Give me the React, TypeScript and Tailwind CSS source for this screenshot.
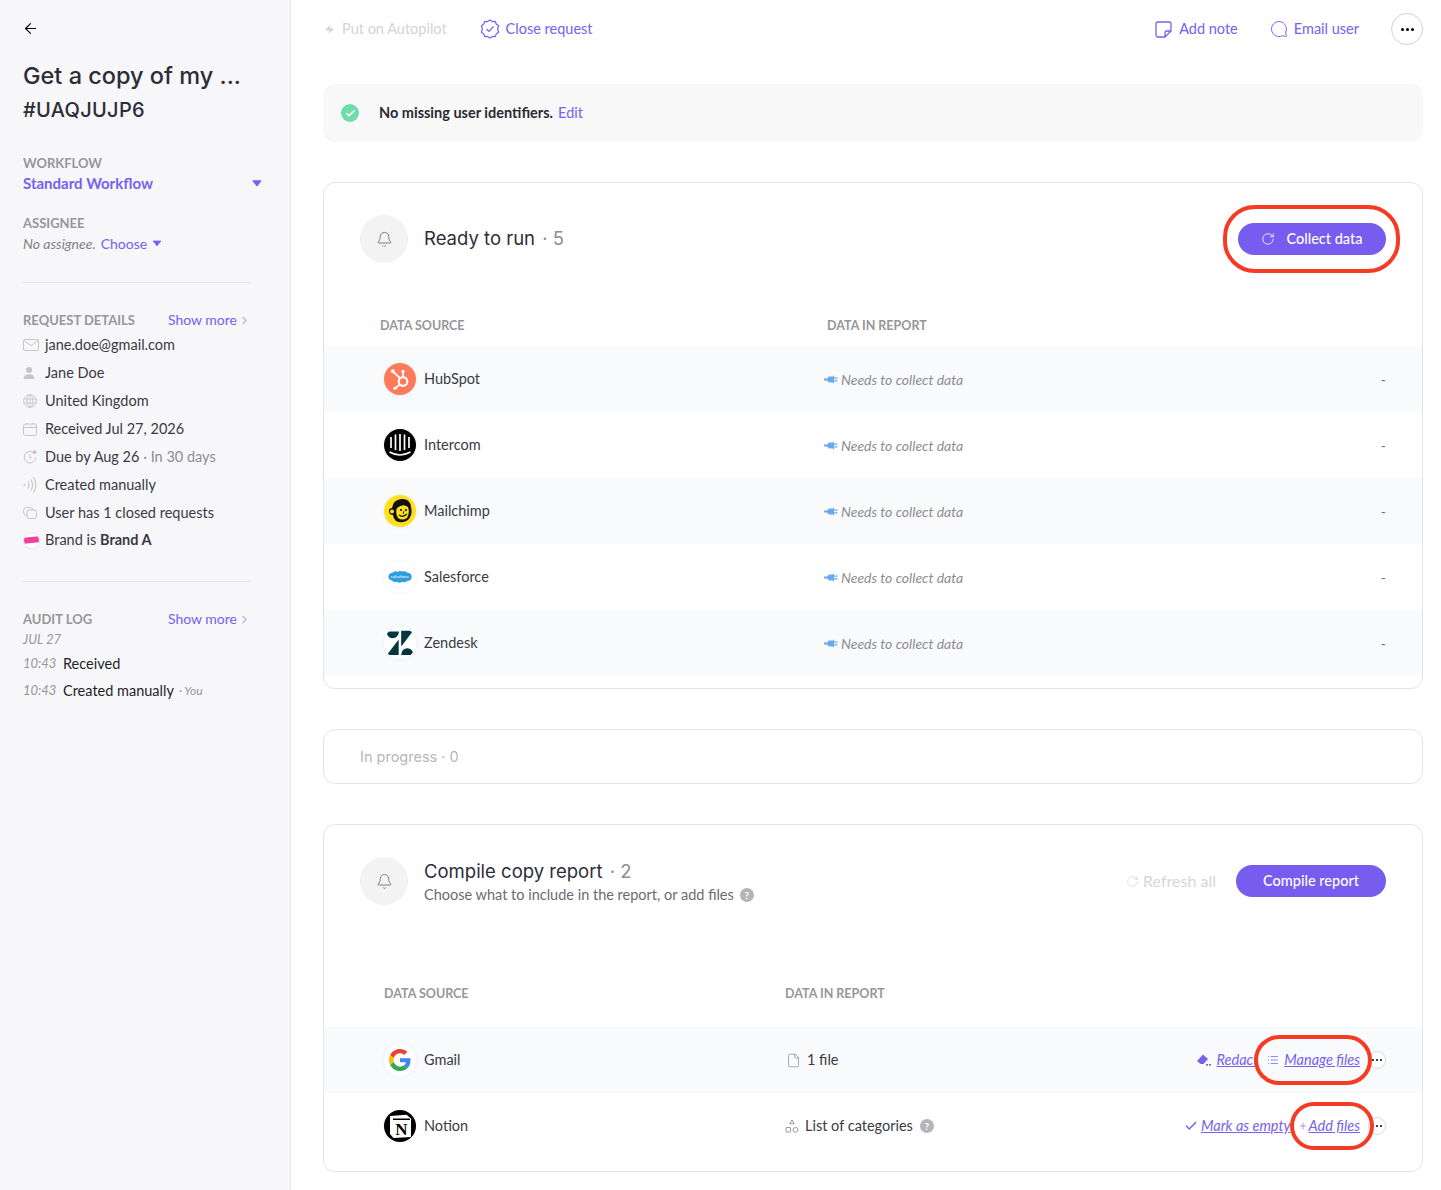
import { ArrowLeft, Bell, Check, ChevronRight, File, List, MessageCircle, Plus, RotateCw, Zap } from "lucide-react";
import type { ReactNode } from "react";

const heading = "[font-family:Inter,sans-serif]";

function Caret({ className = "" }: { className?: string }) {
  return (
    <svg viewBox="0 0 10 7" className={`w-[10px] h-[7px] ${className}`}>
      <path d="M0.5 1 Q0.3 0.3 1 0.3 H9 Q9.7 0.3 9.5 1 L5.5 6 Q5 6.5 4.5 6 Z" fill="#7860f2" />
    </svg>
  );
}

function HelpDot() {
  return (
    <span className="w-[14px] h-[14px] rounded-full bg-[#b5b5b8] text-white text-[10px] font-bold flex items-center justify-center leading-none">
      ?
    </span>
  );
}

function Bubble() {
  return (
    <div className="w-12 h-12 rounded-full bg-[#f3f3f3] flex items-center justify-center shrink-0">
      <Bell size={17} strokeWidth={1.3} className="text-[#75757c]" />
    </div>
  );
}

function Plug() {
  return (
    <svg viewBox="0 0 14 9" className="w-[14px] h-[9px] shrink-0">
      <path d="M0 3.6 H3 L5 1.5 H9 V0.8 H10 V2.6 H13.5 V3.7 H10 V5.3 H13.5 V6.4 H10 V8.2 H9 V7.5 H5 L3 5.4 H0 Z" fill="#6aa9f2" />
    </svg>
  );
}

function DotsButton({ size }: { size: "lg" | "sm" }) {
  const big = size === "lg";
  return (
    <div className={`${big ? "w-8 h-8 border-[#d4d4d4]" : "w-[18px] h-[18px] border-[#dadada]"} rounded-full border bg-white flex items-center justify-center gap-[2px] shrink-0`}>
      {[0, 1, 2].map((i) => (
        <span key={i} className={`${big ? "w-[3px] h-[3px]" : "w-[2px] h-[2px]"} rounded-full bg-black`} />
      ))}
    </div>
  );
}

function RedRing({ className }: { className: string }) {
  return <span className={`absolute border-[4px] border-[#f53b24] rounded-[30px] pointer-events-none ${className}`} />;
}

/* logos */
function LogoCircle({ children, className = "" }: { children: ReactNode; className?: string }) {
  return (
    <div className={`w-8 h-8 rounded-full flex items-center justify-center overflow-hidden shrink-0 shadow-[0_0_4px_rgba(0,0,0,0.06)] ${className}`}>
      {children}
    </div>
  );
}

const HubSpot = (
  <LogoCircle className="bg-[#ff7a59]">
    <svg viewBox="0 0 32 32" className="w-8 h-8" fill="none" stroke="#fff">
      <circle cx="19" cy="18.5" r="4.3" strokeWidth="2.2" />
      <path d="M19 14 V9.5" strokeWidth="1.8" />
      <circle cx="19" cy="8.5" r="1.7" fill="#fff" stroke="none" />
      <path d="M9.5 9 L15.8 15" strokeWidth="1.8" />
      <circle cx="8.8" cy="8.2" r="2" fill="#fff" stroke="none" />
      <path d="M15.6 21.8 L11.5 25" strokeWidth="1.8" />
      <circle cx="11" cy="25.3" r="1.6" fill="#fff" stroke="none" />
    </svg>
  </LogoCircle>
);

const Intercom = (
  <LogoCircle className="bg-black">
    <svg viewBox="0 0 32 32" className="w-8 h-8" fill="none" stroke="#fff" strokeWidth="1.7">
      <path d="M7 8 V19 M11.5 5.5 V21 M16 5 V22 M20.5 5.5 V21 M25 8 V19" />
      <path d="M5.5 23 Q16 29 26.5 23" strokeWidth="1.5" />
    </svg>
  </LogoCircle>
);

const Mailchimp = (
  <LogoCircle className="bg-[#ffe01b]">
    <svg viewBox="0 0 32 32" className="w-8 h-8">
      <path d="M8 13 Q9 5 17 4 Q26 3 27 12 Q29 20 24 25 Q18 29 12 26 Q9 23 9 20 Q5 20 5 16 Q5 13 8 13 Z" fill="#111" />
      <path d="M13 13 Q19 8 24 12 Q26 18 23 23 Q18 26 14 23 Q11 18 13 13 Z" fill="#ffe01b" />
      <circle cx="17" cy="15" r="1.1" fill="#111" />
      <circle cx="22" cy="15" r="1.1" fill="#111" />
      <path d="M15 20 Q19 23 23 19" stroke="#111" strokeWidth="1.2" fill="none" />
      <path d="M20 16 L19 19" stroke="#111" strokeWidth="0.9" fill="none" />
      <circle cx="8" cy="16.5" r="2" fill="#ffe01b" />
    </svg>
  </LogoCircle>
);

const Salesforce = (
  <LogoCircle className="bg-white">
    <svg viewBox="0 0 32 32" className="w-8 h-8">
      <path d="M9 11.5 Q11 9.5 13.5 11 Q15.5 9 18.5 10.6 Q21 9.6 23 11.5 Q27.5 12 27.7 15.8 Q27.5 20 23 20 Q21 22 18 20.8 Q15.5 22.5 13 20.8 Q9.5 21.8 8 19.5 Q4.4 18.6 4.4 15.5 Q4.7 12 9 11.5 Z" fill="#2f9fdc" />
      <text x="16" y="17" textAnchor="middle" fontSize="4.2" fill="#fff" fontFamily="Lato, sans-serif">salesforce</text>
    </svg>
  </LogoCircle>
);

const Zendesk = (
  <LogoCircle className="bg-white">
    <svg viewBox="0 0 32 32" className="w-8 h-8" fill="#03363d">
      <path d="M2.5 4.5 H15 Q14.5 11 8.5 11.2 Q3 11 2.5 4.5 Z" />
      <path d="M14.7 12.5 V28 H2.8 Z" />
      <path d="M17.2 3.8 H29.2 L17.2 19.5 Z" />
      <path d="M17.2 28 Q17.8 21.5 23.3 21.3 Q29 21.5 29.3 28 Z" />
    </svg>
  </LogoCircle>
);

const Google = (
  <LogoCircle className="bg-white">
    <svg viewBox="0 0 48 48" className="w-[22px] h-[22px]">
      <path fill="#EA4335" d="M24 9.5c3.54 0 6.71 1.22 9.21 3.6l6.85-6.85C35.9 2.38 30.47 0 24 0 14.62 0 6.51 5.38 2.56 13.22l7.98 6.19C12.43 13.72 17.74 9.5 24 9.5z" />
      <path fill="#4285F4" d="M46.98 24.55c0-1.57-.15-3.09-.38-4.55H24v9.02h12.94c-.58 2.96-2.26 5.48-4.78 7.18l7.73 6c4.51-4.18 7.09-10.36 7.09-17.65z" />
      <path fill="#FBBC05" d="M10.53 28.59c-.48-1.45-.76-2.99-.76-4.59s.27-3.14.76-4.59l-7.98-6.19C.92 16.46 0 20.12 0 24c0 3.88.92 7.54 2.56 10.78l7.97-6.19z" />
      <path fill="#34A853" d="M24 48c6.48 0 11.93-2.13 15.89-5.81l-7.73-6c-2.15 1.45-4.92 2.3-8.16 2.3-6.26 0-11.57-4.22-13.47-9.91l-7.98 6.19C6.51 42.62 14.62 48 24 48z" />
    </svg>
  </LogoCircle>
);

const Notion = (
  <LogoCircle className="bg-black">
    <svg viewBox="0 0 32 32" className="w-8 h-8">
      <path d="M6 6 L22.5 4.8 L27 8.5 V27 L9.5 28 L6 24 Z" fill="#fff" />
      <path d="M9 9.2 H26" stroke="#000" strokeWidth="1.4" />
      <text x="17.5" y="25" textAnchor="middle" fontSize="17" fontWeight="700" fill="#000" fontFamily="'Liberation Serif', serif">N</text>
    </svg>
  </LogoCircle>
);

const SideMail = (
  <svg viewBox="0 0 16 12" className="w-4 h-3" fill="none" stroke="#c6c6ca">
    <rect x="0.5" y="0.5" width="15" height="11" rx="1.5" />
    <path d="M1 1.5 L8 6.5 L15 1.5" />
  </svg>
);
const SidePerson = (
  <svg viewBox="0 0 12 12" className="w-3 h-3" fill="#c6c6ca">
    <circle cx="6" cy="3" r="3" />
    <path d="M0.5 12 Q0.5 7.3 6 7.3 Q11.5 7.3 11.5 12 Z" />
  </svg>
);
const SideGlobe = (
  <svg viewBox="0 0 14 14" className="w-[14px] h-[14px]" fill="none" stroke="#c6c6ca" strokeWidth="0.9">
    <circle cx="7" cy="7" r="6.4" />
    <ellipse cx="7" cy="7" rx="3" ry="6.4" />
    <path d="M7 0.6 V13.4 M0.8 5 H13.2 M0.8 9 H13.2" />
  </svg>
);
const SideCalendar = (
  <svg viewBox="0 0 14 13" className="w-[14px] h-[13px]" fill="none" stroke="#c6c6ca">
    <rect x="0.5" y="1" width="13" height="11.5" rx="2" />
    <path d="M0.5 4.5 H13.5 M4 0 V1.5 M10 0 V1.5" />
  </svg>
);
const SideClock = (
  <svg viewBox="0 0 14 14" className="w-[14px] h-[14px]" fill="none" stroke="#c6c6ca">
    <path d="M10.5 2.6 A5.8 5.8 0 1 0 12.8 7.5" />
    <path d="M6.8 4.5 V7.8 H9.3" />
    <circle cx="11.6" cy="2.2" r="1.9" fill="#c6c6ca" stroke="none" />
  </svg>
);
const SideSignal = (
  <svg viewBox="0 0 14 18" className="w-[14px] h-[18px]" fill="none" stroke="#c6c6ca" strokeWidth="1.1">
    <circle cx="1.5" cy="9" r="1.1" fill="#c6c6ca" stroke="none" />
    <path d="M5 5.5 Q7 9 5 12.5 M8 3.5 Q11 9 8 14.5 M10.5 1 Q15 9 10.5 17" />
  </svg>
);
const SideStack = (
  <svg viewBox="0 0 14 12" className="w-[14px] h-3" fill="none" stroke="#c6c6ca">
    <rect x="4" y="3" width="9.5" height="8.5" rx="2.5" />
    <path d="M4 9 Q0.6 8.5 0.6 5 V3.5 Q0.6 0.6 3.5 0.6 H7 Q9.7 0.6 10 3" />
  </svg>
);
const SideBrand = (
  <div className="w-[17px] h-[17px] rounded-full bg-white border border-[#e4e4e6] flex items-center justify-center overflow-hidden">
    <span className="w-[15px] h-[6px] bg-[#f23f9f] -rotate-6" />
  </div>
);

const details: { icon: ReactNode; body: ReactNode }[] = [
  { icon: SideMail, body: "jane.doe@gmail.com" },
  { icon: SidePerson, body: "Jane Doe" },
  { icon: SideGlobe, body: "United Kingdom" },
  { icon: SideCalendar, body: "Received Jul 27, 2026" },
  { icon: SideClock, body: <>Due by Aug 26 <span className="text-[#8d8d92]">· In 30 days</span></> },
  { icon: SideSignal, body: "Created manually" },
  { icon: SideStack, body: "User has 1 closed requests" },
  { icon: SideBrand, body: <>Brand is <span className="font-bold">Brand A</span></> },
];

const readySources = [
  { name: "HubSpot", logo: HubSpot },
  { name: "Intercom", logo: Intercom },
  { name: "Mailchimp", logo: Mailchimp },
  { name: "Salesforce", logo: Salesforce },
  { name: "Zendesk", logo: Zendesk },
];

function Label({ children }: { children: ReactNode }) {
  return <div className="text-[13px] font-bold text-[#96969b] leading-4">{children}</div>;
}

function ShowMore() {
  return (
    <a className="flex items-center text-[14px] text-[#7860f2] leading-4">
      Show more <ChevronRight size={13} strokeWidth={1.5} className="ml-[1px]" />
    </a>
  );
}

function Sidebar() {
  return (
    <aside className="w-[291px] shrink-0 h-full bg-[#f7f7fa] border-r border-[#e6e6ea] pl-[23px] pr-[39px]">
      <div className="h-[58px] flex items-center pb-[1px]">
        <ArrowLeft size={17} strokeWidth={1.5} className="text-black -ml-[1px]" />
      </div>
      <h1 className={`${heading} text-[23.5px] font-medium text-[#2d2d38] leading-9 whitespace-nowrap`}>Get a copy of my ...</h1>
      <h2 className={`${heading} text-[20px] font-medium text-[#2d2d38] leading-7 mt-[2px] tracking-[0.3px]`}>#UAQJUJP6</h2>
      <div className="mt-[31px]">
        <Label>WORKFLOW</Label>
        <div className="flex items-center justify-between h-[24px] -mr-3">
          <span className="text-[15px] font-bold text-[#7860f2]">Standard Workflow</span>
          <Caret className="mr-[1px]" />
        </div>
      </div>
      <div className="mt-[20px]">
        <Label>ASSIGNEE</Label>
        <div className="flex items-center h-[24px] text-[14px]">
          <span className="italic text-[#808085]">No assignee.</span>
          <span className="text-[#7860f2] ml-[5px]">Choose</span>
          <Caret className="ml-[5px] scale-90" />
        </div>
      </div>
      <div className="h-px bg-[#e4e4e8] mt-[27px]" />

      <div className="flex items-center justify-between mt-[29px] h-4">
        <Label>REQUEST DETAILS</Label>
        <ShowMore />
      </div>
      <div className="mt-[3px]">
        {details.map((d, i) => (
          <div key={i} className="h-7 flex items-center text-[14.5px] text-[#3a3a44] last:h-[26px]">
            <span className="w-[22px] flex items-center shrink-0">{d.icon}</span>
            <span>{d.body}</span>
          </div>
        ))}
      </div>
      <div className="h-px bg-[#e4e4e8] mt-[28px]" />

      <div className="flex items-center justify-between mt-[29px] h-4">
        <Label>AUDIT LOG</Label>
        <ShowMore />
      </div>
      <div className="italic text-[13px] text-[#96969b] leading-4 mt-[4px]">JUL 27</div>
      <div className="flex items-center h-[27px] mt-[3px] text-[14.5px] text-[#1f1f26]">
        <span className="italic text-[13px] text-[#96969b] w-[40px]">10:43</span>Received
      </div>
      <div className="flex items-center h-[27px] text-[14.5px] text-[#1f1f26]">
        <span className="italic text-[13px] text-[#96969b] w-[40px]">10:43</span>Created manually
        <span className="italic text-[12px] text-[#96969b] ml-[5px]">· You</span>
      </div>
    </aside>
  );
}

function TopBar() {
  return (
    <div className="h-[58px] flex items-center text-[14.5px]">
      <div className="flex items-center text-[#d4d4d6] pl-[1px]">
        <Zap size={11} fill="#d4d4d6" strokeWidth={0} className="mr-[7px]" />
        Put on Autopilot
      </div>
      <div className="flex items-center text-[#7860f2] ml-[33px]">
        <svg viewBox="0 0 20 20" className="w-5 h-5 mr-[6px]" fill="none" stroke="#7860f2" strokeWidth="1.2">
          <path d="M10 1 L12.4 2.6 L15.3 2.4 L16.2 5 L18.6 6.8 L17.6 10 L18.6 13.2 L16.2 15 L15.3 17.6 L12.4 17.4 L10 19 L7.6 17.4 L4.7 17.6 L3.8 15 L1.4 13.2 L2.4 10 L1.4 6.8 L3.8 5 L4.7 2.4 L7.6 2.6 Z" strokeLinejoin="round" />
          <path d="M6.5 10 L9 12.5 L13.5 7.5" />
        </svg>
        Close request
      </div>
      <div className="ml-auto flex items-center text-[#7860f2]">
        <svg viewBox="0 0 17 17" className="w-[17px] h-[17px] mr-[7px]" fill="none" stroke="#7860f2" strokeWidth="1.3">
          <path d="M3 1 H14 Q16 1 16 3 V10 L10 16 H3 Q1 16 1 14 V3 Q1 1 3 1 Z M16 10 H11.5 Q10 10 10 11.5 V16" strokeLinejoin="round" />
        </svg>
        Add note
        <MessageCircle size={18} strokeWidth={1.3} className="ml-[32px] mr-[6px] -scale-x-100" />
        Email user
        <div className="ml-[32px]">
          <DotsButton size="lg" />
        </div>
      </div>
    </div>
  );
}

function Notice() {
  return (
    <div className="mt-[26px] h-[58px] rounded-xl bg-[#f8f8f8] flex items-center pl-[18px] text-[14.5px]">
      <span className="w-[18px] h-[18px] rounded-full bg-[#6fdcab] flex items-center justify-center">
        <Check size={11} strokeWidth={3.5} className="text-white" />
      </span>
      <span className="font-bold text-[#2a2a33] ml-[20px]">No missing user identifiers.</span>
      <span className="text-[#7860f2] ml-[5px]">Edit</span>
    </div>
  );
}

function TableHead({ first, second, col }: { first: string; second: string; col: string }) {
  return (
    <div className={`flex text-[12.5px] font-bold text-[#96969b] leading-4 ${first ? "" : ""}`}>
      <span className={col}>{first}</span>
      <span>{second}</span>
    </div>
  );
}

function ReadyCard() {
  return (
    <section className="mt-10 border border-[#e4e4e6] rounded-xl h-[507px]">
      <div className="flex items-center pt-8 pl-9 pr-9">
        <Bubble />
        <div className={`${heading} ml-4 text-[18.5px] text-[#2d2d38]`}>
          Ready to run <span className="text-[#8d8d92] ml-[2px]">· 5</span>
        </div>
        <div className="relative ml-auto">
          <button className="w-[148px] h-8 rounded-full bg-[#775cf0] text-white text-[14.5px] font-medium flex items-center justify-center gap-[11px]">
            <RotateCw size={14} strokeWidth={1.4} />
            Collect data
          </button>
          <RedRing className="-left-[15px] -right-[14px] -top-[18px] -bottom-[18px] rounded-[32px]" />
        </div>
      </div>
      <div className="mt-[55px] pl-14">
        <TableHead first="DATA SOURCE" second="DATA IN REPORT" col="w-[447px]" />
      </div>
      <div className="mt-[12px]">
        {readySources.map((s, i) => (
          <div key={s.name} className={`h-[66px] flex items-center pl-[60px] pr-9 ${i % 2 === 0 ? "bg-[#f9fafc]" : "bg-white"}`}>
            <div className="w-[440px] flex items-center gap-2 text-[14.5px] text-[#3a3a44]">
              {s.logo}
              {s.name}
            </div>
            <div className="flex items-center gap-[3px] italic text-[14px] text-[#8d8d92]">
              <Plug />
              Needs to collect data
            </div>
            <span className="ml-auto text-[14px] text-[#6b6b70]">-</span>
          </div>
        ))}
      </div>
    </section>
  );
}

function ActionLink({ children }: { children: ReactNode }) {
  return <span className="italic underline text-[#7860f2] text-[14.5px]">{children}</span>;
}

function CompileCard() {
  return (
    <section className="mt-10 border border-[#e4e4e6] rounded-xl h-[348px]">
      <div className="flex items-center pt-8 pl-9 pr-9">
        <Bubble />
        <div className="ml-4">
          <div className={`${heading} text-[18.5px] text-[#2d2d38] leading-7`}>
            Compile copy report <span className="text-[#8d8d92] ml-[2px]">· 2</span>
          </div>
          <div className="flex items-center gap-[6px] text-[14.5px] text-[#6b6b72] leading-5">
            Choose what to include in the report, or add files
            <HelpDot />
          </div>
        </div>
        <div className="ml-auto flex items-center text-[#d6d6d8] text-[16px]">
          <RotateCw size={13} strokeWidth={1.4} className="mr-[4px]" />
          Refresh all
          <button className="ml-5 w-[150px] h-8 rounded-full bg-[#775cf0] text-white text-[14.5px] font-medium">
            Compile report
          </button>
        </div>
      </div>
      <div className="mt-[81px] pl-[60px]">
        <TableHead first="DATA SOURCE" second="DATA IN REPORT" col="w-[401px]" />
      </div>
      <div className="mt-[25px]">
        <div className="h-[66px] flex items-center pl-[60px] pr-9 bg-[#f9fafc]">
          <div className="w-[401px] flex items-center gap-2 text-[14.5px] text-[#3a3a44]">
            {Google}
            Gmail
          </div>
          <div className="flex items-center text-[14.5px] text-[#3a3a44]">
            <File size={15} strokeWidth={1.2} className="text-[#8d8d92] ml-[1px] mr-[6px]" />
            1 file
          </div>
          <div className="ml-auto flex items-center">
            <svg viewBox="0 0 16 13" className="w-4 h-[13px] mr-[5px]" fill="#7860f2">
              <path d="M7 0.5 L12 5 L7.5 10 H4.5 L1 7 Z" />
              <rect x="10" y="10" width="2" height="1.6" />
              <rect x="13" y="10" width="2" height="1.6" />
            </svg>
            <ActionLink>Redact</ActionLink>
            <div className="relative flex items-center ml-[9px] mr-2">
              <List size={12} strokeWidth={1.5} className="text-[#7860f2] mr-[5px]" />
              <ActionLink>Manage files</ActionLink>
              <RedRing className="-left-[13px] -right-[12px] -top-[14px] -bottom-[14px]" />
            </div>
            <DotsButton size="sm" />
          </div>
        </div>
        <div className="h-[66px] flex items-center pl-[60px] pr-9 bg-white">
          <div className="w-[401px] flex items-center gap-2 text-[14.5px] text-[#3a3a44]">
            {Notion}
            Notion
          </div>
          <div className="flex items-center text-[14.5px] text-[#3a3a44]">
            <svg viewBox="0 0 14 14" className="w-[14px] h-[14px] mr-[6px]" fill="none" stroke="#8d8d92" strokeWidth="0.9">
              <path d="M7 1 L9.2 4.8 H4.8 Z" />
              <rect x="1" y="8.5" width="4.5" height="4.5" rx="0.5" />
              <circle cx="10.5" cy="10.8" r="2.4" />
            </svg>
            List of categories
            <span className="ml-[7px]">
              <HelpDot />
            </span>
          </div>
          <div className="ml-auto flex items-center">
            <Check size={14} strokeWidth={2.5} className="text-[#7860f2] mr-[3px]" />
            <ActionLink>Mark as empty</ActionLink>
            <div className="relative flex items-center ml-[7px] mr-2">
              <Plus size={10} strokeWidth={1.5} className="text-[#7860f2] mr-[1px]" />
              <ActionLink>Add files</ActionLink>
              <RedRing className="-left-[8px] -right-[14px] -top-[13px] -bottom-[13px]" />
            </div>
            <DotsButton size="sm" />
          </div>
        </div>
      </div>
    </section>
  );
}

export default function App() {
  return (
    <div className="h-[1190px] w-full flex overflow-hidden bg-white [font-family:Lato,sans-serif]">
      <Sidebar />
      <main className="flex-1 pl-8 pr-[18px]">
        <TopBar />
        <Notice />
        <ReadyCard />
        <div className={`${heading} mt-10 h-[55px] border border-[#e4e4e6] rounded-xl flex items-center pl-9 text-[14.5px] text-[#b6b6ba]`}>
          In progress · 0
        </div>
        <CompileCard />
      </main>
    </div>
  );
}
